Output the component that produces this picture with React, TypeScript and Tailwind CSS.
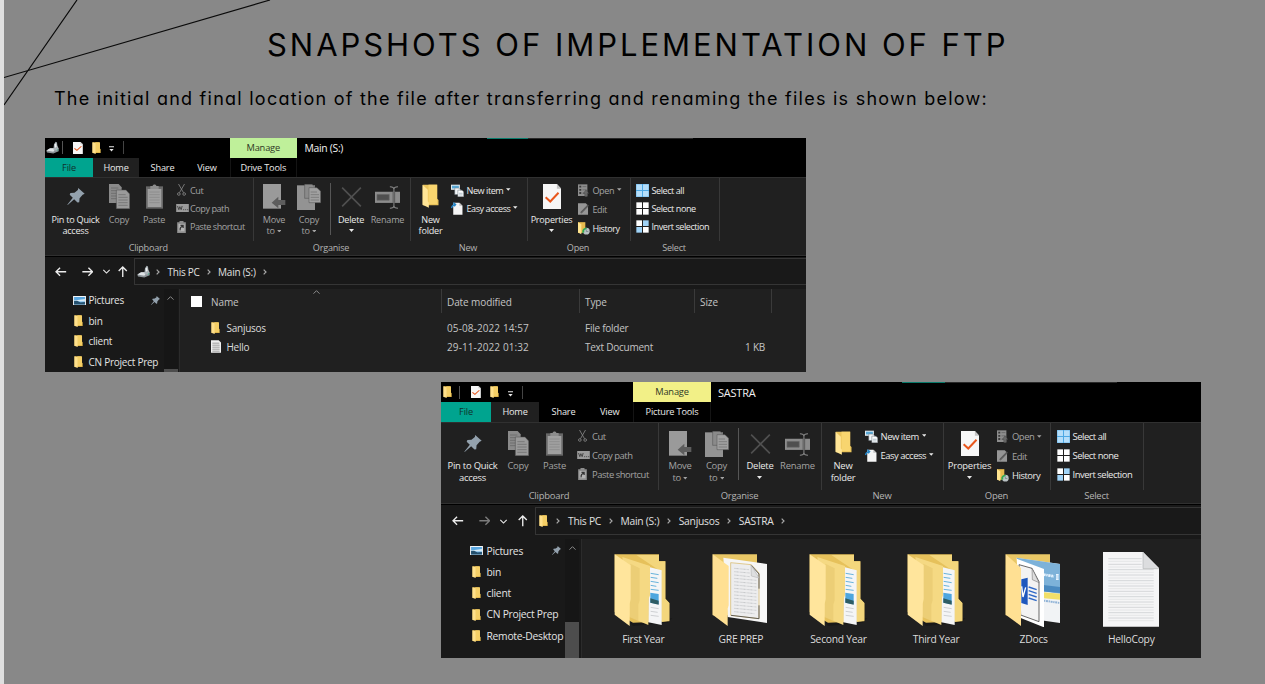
import type { ReactNode } from 'react';

type IconProps = { className?: string };

/* ---------- small icons ---------- */

const PinIcon = ({ className = '' }: IconProps) => (
  <svg viewBox="0 0 51 50" className={className}>
    <path fill="#93a1ad" d="M32 0 51 17 45 20 36 30 35 42 30 43 20 33 1 50 0 49 16 29 7 20 9 15 21 14 31 6Z" />
  </svg>
);

const FolderIcon = ({ className = '' }: IconProps) => (
  <svg viewBox="0 0 27 36" preserveAspectRatio="none" className={className}>
    <path fill="#e2b84c" d="M2 1H22V18L26 22V33H2Z" />
    <path fill="#f5cf66" d="M10 1H24V30H10Z" />
    <path fill="#ffe08a" d="M1 1 11 4V36L1 32Z" />
  </svg>
);

const NewFolderIcon = () => (
  <svg viewBox="0 0 50 72" className="h-[24px] w-[17px]">
    <path fill="#e9c35b" d="M2 2H45V44L49 48V64H2Z" />
    <path fill="#f8d56f" d="M19 2H45V60H19Z" />
    <path fill="#ffe596" d="M1 2 17 17V52L20 56V71L1 62Z" />
  </svg>
);

const DriveIcon = ({ className = '' }: IconProps) => (
  <svg viewBox="0 0 42 36" className={className}>
    <path fill="#8d9499" d="M1 28 13 20 38 20V29L22 36 3 33Z" />
    <path fill="#dfe3e6" d="M1 27 12 20 30 20 22 31Z" />
    <path fill="#a9b1b6" d="M22 24 24 8 29 1 33 3 34 12 38 21 30 28Z" />
    <path fill="#eef1f2" d="M26 9 30 5 32 16 27 19Z" />
    <path fill="#3bbf8f" d="M33 24h3v3h-3z" />
  </svg>
);

const CheckDocIcon = ({ className = '' }: IconProps) => (
  <svg viewBox="0 0 56 74" preserveAspectRatio="none" className={className}>
    <path fill="#f6f6f6" d="M0 0H42L55 14V74H0Z" />
    <path fill="#c4c4c4" d="M42 0V14H55Z" />
    <path fill="none" stroke="#e8561c" strokeWidth="6" d="M8 39 22 52 47 26" />
  </svg>
);

const CopyIcon = () => (
  <svg viewBox="0 0 63 75" className="h-[25px] w-[21px]">
    <path fill="#8a8a8a" d="M0 0H29L38 10V57H0Z" />
    <path stroke="#626262" strokeWidth="2" d="M6 12H28M6 20H32M6 28H32M6 36H32M6 44H32" />
    <path fill="#9a9a9a" stroke="#4b4b4b" strokeWidth="1.5" d="M22 18H51L62 30V74H22Z" />
    <path stroke="#686868" strokeWidth="2" d="M28 32H50M28 40H56M28 48H56M28 56H56M28 64H56" />
  </svg>
);

const PasteIcon = () => (
  <svg viewBox="0 0 51 75" className="h-[25px] w-[17px]">
    <path fill="#686868" d="M0 7H51V74H0Z" />
    <path fill="#a0a0a0" d="M5 15H46V69H5Z" />
    <path fill="#8c8c8c" d="M13 6H20C20 0 31 0 31 6H38V15H13Z" />
    <path stroke="#858585" strokeWidth="2" d="M10 24H41M10 32H41M10 40H41M10 48H41M10 56H41" />
  </svg>
);

const MoveIcon = () => (
  <svg viewBox="0 0 69 75" className="h-[25px] w-[23px]">
    <path fill="#9a9a9a" d="M0 0H54V74H0Z" />
    <path fill="#5d5d5d" d="M26 56 46 38V48H67V63H46V73Z" />
  </svg>
);

const CopyToIcon = () => (
  <svg viewBox="0 0 72 78" className="h-[26px] w-[24px]">
    <path fill="#939393" d="M0 4H54V78H0Z" />
    <path fill="#8a8a8a" stroke="#4f4f4f" strokeWidth="1.5" d="M23 1H45L54 10V43H23Z" />
    <path fill="#a0a0a0" stroke="#505050" strokeWidth="1.5" d="M36 11H60L71 22V56H36Z" />
    <path stroke="#6c6c6c" strokeWidth="2" d="M41 24H60M41 32H66M41 40H66M41 48H66" />
  </svg>
);

const DeleteIcon = () => (
  <svg viewBox="0 0 62 62" className="mt-[3px] h-[20px] w-[21px]">
    <path fill="none" stroke="#505050" strokeWidth="5" d="M2 2 60 60M60 2 2 60" />
  </svg>
);

const RenameIcon = () => (
  <svg viewBox="0 0 74 68" className="mt-[2px] h-[23px] w-[25px]">
    <path fill="#8c8c8c" d="M0 17H74V50H0Z" />
    <path fill="#4f4f4f" stroke="#666" strokeWidth="2" d="M6 25H42V42H6Z" />
    <path fill="none" stroke="#444" strokeWidth="7" d="M56 17V50" />
    <path fill="none" stroke="#8a8a8a" strokeWidth="3" d="M44 2Q56 2 56 10Q56 2 68 2M56 8V60M44 66Q56 66 56 58Q56 66 68 66" />
  </svg>
);

const CutIcon = () => (
  <svg viewBox="0 0 26 36" className="h-[12px] w-[9px]">
    <path fill="none" stroke="#858585" strokeWidth="2.5" d="M4 0 19 26M22 0 7 26" />
    <circle cx="5" cy="30" r="4" fill="none" stroke="#858585" strokeWidth="2.5" />
    <circle cx="21" cy="30" r="4" fill="none" stroke="#858585" strokeWidth="2.5" />
  </svg>
);

const CopyPathIcon = () => (
  <svg viewBox="0 0 38 24" className="h-[8px] w-[13px]">
    <path fill="#9b9b9b" d="M0 0H38V24H0Z" />
    <path fill="none" stroke="#333" strokeWidth="2.4" d="M4 6 8 17 11 8 15 17 18 6M21 17H24M27 17H30M33 17H36" />
  </svg>
);

const PasteShortcutIcon = () => (
  <svg viewBox="0 0 26 36" className="h-[12px] w-[9px]">
    <path fill="#8e8e8e" d="M0 4H7V0H19V4H26V36H0Z" />
    <path fill="#b4b4b4" d="M4 9H22V31H4Z" />
    <path fill="none" stroke="#333" strokeWidth="3.5" d="M9 28C8 21 11 17 17 16M10 13H18V21" />
  </svg>
);

const NewItemIcon = () => (
  <svg viewBox="0 0 38 38" className="h-[13px] w-[13px]">
    <path fill="#dfe9ef" d="M0 2H26V17H0Z" />
    <path fill="#58a7d4" d="M3 5H23V13H3Z" />
    <path fill="#f3f6f8" stroke="#6d7780" strokeWidth="1.5" d="M11 12H23L27 16V31H11Z" />
    <path fill="#fff" stroke="#6d7780" strokeWidth="1.5" d="M20 18H32L37 23V37H20Z" />
    <path stroke="#8ea3b0" strokeWidth="2" d="M23 27H34M23 32H34" />
  </svg>
);

const EasyAccessIcon = () => (
  <svg viewBox="0 0 34 38" className="h-[13px] w-[12px]">
    <path fill="#f5f5f5" d="M6 2H24L33 11V37H6Z" />
    <path fill="#bdbdbd" d="M24 2V11H33Z" />
    <path fill="none" stroke="#2384c6" strokeWidth="4" d="M1 18C2 11 5 8 12 7M6 2 13 7 9 13" />
  </svg>
);

const OpenIcon = () => (
  <svg viewBox="0 0 34 38" className="h-[13px] w-[11px]">
    <path fill="#8d8d8d" d="M0 0H29V36H0Z" />
    <path fill="#383838" d="M4 4H10V10H4ZM4 14H10V20H4ZM4 24H10V30H4Z" />
    <path stroke="#5c5c5c" strokeWidth="2" d="M14 7H26M14 17H26M14 27H20" />
    <path fill="#686868" stroke="#303030" strokeWidth="1" d="M25 17 34 28H29V38H21V28H16Z" />
  </svg>
);

const EditIcon = () => (
  <svg viewBox="0 0 34 36" className="h-[12px] w-[11px]">
    <path fill="#969696" d="M0 0H24L31 7V36H0Z" />
    <path fill="none" stroke="#4b4b4b" strokeWidth="5" d="M9 30 32 6" />
    <path fill="none" stroke="#777" strokeWidth="2" d="M8 31 30 8" />
  </svg>
);

const HistoryIcon = () => (
  <svg viewBox="0 0 36 38" className="h-[13px] w-[12px]">
    <path fill="#e7bb4e" d="M0 0H22V32H0Z" />
    <path fill="#ffe48f" d="M0 0 10 6V36L0 31Z" />
    <circle cx="25" cy="27" r="10" fill="#b9c2c4" />
    <path fill="#32a852" d="M13 25C16 17 23 15 27 18L23 22C19 22 18 25 19 30L13 33Z" />
    <path fill="none" stroke="#68767a" strokeWidth="2" d="M25 22V28H31" />
  </svg>
);

const SelectIcon = ({ fills, joined = false }: { fills: string[]; joined?: boolean }) => (
  <svg viewBox="0 0 38 38" className="h-[13px] w-[13px]">
    {joined && <path fill="#4da8e4" d="M0 0H38V38H0Z" />}
    <path fill={fills[0]} d="M1 1H17.5V17.5H1Z" />
    <path fill={fills[1]} d="M20.5 1H37V17.5H20.5Z" />
    <path fill={fills[2]} d="M1 20.5H17.5V37H1Z" />
    <path fill={fills[3]} d="M20.5 20.5H37V37H20.5Z" />
  </svg>
);

const PicturesIcon = () => (
  <svg viewBox="0 0 38 28" className="h-[9.5px] w-[13px]">
    <path fill="#f2f5f7" d="M0 0H38V28H0Z" />
    <path fill="#5aa7e0" d="M3 3H35V25H3Z" />
    <path fill="#d7ecf7" d="M3 13 35 9V16H3Z" />
    <path fill="#24506e" d="M3 15 12 14 22 19 35 18V25H3Z" />
  </svg>
);

const TextFileIcon = () => (
  <svg viewBox="0 0 30 38" className="h-[13px] w-[10px]">
    <path fill="#f0f0f0" d="M0 0H23L30 7V38H0Z" />
    <path stroke="#8c8c8c" strokeWidth="2.5" d="M4 9H25M4 15H26M4 21H26M4 27H26M4 33H26" />
  </svg>
);

const Caret = ({ className = '' }: IconProps) => (
  <svg viewBox="0 0 10 6" className={className}>
    <path fill="currentColor" d="M0 0H10L5 6Z" />
  </svg>
);

const QuickMenuIcon = () => (
  <svg viewBox="0 0 14 16" className="h-[6px] w-[5px] text-[#e8e8e8]">
    <path fill="currentColor" d="M0 0H14V3H0ZM1 8H13L7 15Z" />
  </svg>
);

const Chevron = ({ className = '' }: IconProps) => (
  <svg viewBox="0 0 12 18" className={className}>
    <path fill="none" stroke="#a8a8a8" strokeWidth="3.6" d="M2 2 9 9 2 16" />
  </svg>
);

const UpChevron = ({ className = '' }: IconProps) => (
  <svg viewBox="0 0 20 12" className={className}>
    <path fill="none" stroke="#8c8c8c" strokeWidth="3" d="M1 11 10 2 19 11" />
  </svg>
);

const ArrowIcon = ({ d, className }: { d: string; className: string }) => (
  <svg viewBox="0 0 34 34" className={className}>
    <path fill="none" stroke="currentColor" strokeWidth="4" d={d} />
  </svg>
);

/* ---------- large folder thumbnails ---------- */

const FolderBack = () => (
  <>
    <path fill="#111" opacity=".45" d="M50 212 178 198 165 212 60 222Z" />
    <path fill="#e6c15b" d="M5 7H138V28H157V140L169 153V208L60 212 5 180Z" />
    <path fill="#f3d67c" d="M70 9H138V28H157V140L169 153V206L146 210V60Z" />
  </>
);

const YearFolder = () => (
  <svg viewBox="0 0 180 225" className="h-[75px] w-[60px]">
    <FolderBack />
    <path fill="#f4f5f6" d="M108 45 146 55V219L106 211Z" />
    <path stroke="#68b3dc" strokeWidth="3" d="M113 64 137 68M113 76 133 79M113 88 137 92M113 100 130 103M113 112 137 115" />
    <path fill="#4da6df" d="M112 122 137 126V157L112 152Z" />
    <path fill="#2e5c63" d="M112 139 122 142 137 146V158L112 152Z" />
    <path stroke="#b9bcc0" strokeWidth="2" d="M113 166 137 170M113 178 134 181M113 190 137 193" />
    <path fill="#f5d983" d="M28 15 111 42V130L106 143V219L49 195Z" />
    <path fill="#e2c067" opacity=".45" d="M52 35 80 49V145L76 158V207L50 198Z" />
    <path fill="#ffe59c" d="M5 7 53 40V142L50 155V222L5 188Z" />
  </svg>
);

const DocsFolder = () => (
  <svg viewBox="0 0 180 225" className="h-[75px] w-[60px]">
    <path fill="#e9c766" d="M5 7H138V190H5Z" />
    <path fill="#f6f6f6" d="M37 17 168 36V213L50 195Z" />
    <path fill="#ededee" stroke="#d4b35d" strokeWidth="2" d="M59 32 121 38 144 63V200L59 190Z" />
    <path fill="none" stroke="#484848" strokeWidth="2.5" d="M60 190 144 200V160M144 110V66L120 39" />
    <path
      stroke="#c6c8ca"
      strokeWidth="3"
      strokeDasharray="4 2 7 3 3 2"
      d="M70 49 114 53M70 59 116 63M70 69 116 74M70 79 136 85M70 89 136 95M70 99 136 105M70 109 136 115M70 119 136 125M70 129 136 135M70 139 136 145M70 149 136 155M70 159 136 165M70 169 136 175M70 179 130 185"
    />
    <path fill="#dedfe0" stroke="#aaa" strokeWidth="1.5" d="M120 39 121 72 144 78Z" />
    <path fill="#ffe093" d="M5 7 53 42V160L50 170V222L5 188Z" />
  </svg>
);

const ZDocsFolder = () => (
  <svg viewBox="0 0 180 225" className="h-[75px] w-[60px]">
    <path fill="#e9c766" d="M5 7H138V190H5Z" />
    <path fill="#f1f3f5" d="M37 17 168 36V213L110 205Z" />
    <path fill="#7db2d9" d="M37 17 168 36V125L110 117Z" />
    <path fill="#4a8ac0" d="M112 98 168 105V123L112 118Z" />
    <path fill="#f1df68" d="M112 120 168 125V143L112 138Z" />
    <path stroke="#e9f5ff" strokeWidth="8" strokeDasharray="5 2 4 2 7 2" d="M120 68 150 73M160 66V84" />
    <path stroke="#8fb2d6" strokeWidth="6" strokeDasharray="4 2 6 2" d="M120 146 168 153" />
    <path fill="#fff" d="M38 20 120 51V226L50 198Z" />
    <path fill="#f3f3f3" stroke="#4b4b4b" strokeWidth="2.5" d="M45 38 84 49 105 89V209L50 189Z" />
    <path fill="#ddd" stroke="#666" strokeWidth="1.5" d="M84 49 85 83 105 92Z" />
    <path fill="#1f58bd" d="M52 82 71 77V159L52 153Z" />
    <path fill="none" stroke="#fff" strokeWidth="4" d="M53 103 57 135 65 106" />
    <path stroke="#2f69c7" strokeWidth="4" d="M74 105 98 113M74 116 98 124M74 127 98 135M74 138 98 146" />
    <path fill="#ffe093" d="M5 7 51 48V222L5 188Z" />
  </svg>
);

const TextDocument = () => (
  <svg viewBox="0 0 180 225" className="h-[75px] w-[60px]">
    <path fill="#f5f5f6" d="M6 0H126L174 48V224H6Z" />
    <path
      stroke="#c4c7ca"
      strokeWidth="2"
      d="M22 20H122M22 37H122M22 53H158M22 69H158M22 86H158M22 102H158M22 118H158M22 134H158M22 150H158M22 166H158M22 182H158M22 198H158"
    />
    <path
      stroke="#dcdee0"
      strokeWidth="2"
      d="M22 28H122M22 45H122M22 61H158M22 78H158M22 94H158M22 110H158M22 126H158M22 142H158M22 158H158M22 174H158M22 190H158M22 206H158"
    />
    <path fill="#dcdddf" d="M126 0V50H174Z" />
    <path fill="none" stroke="#b4b6b8" strokeWidth="2" d="M126 0V50H174" />
  </svg>
);

/* ---------- ribbon ---------- */

type Layout = {
  accent: string;
  titleBar: string;
  tabBar: string;
  lead: string;
  manage: string;
  titleText: string;
  tabs: [string, string, string, string];
  toolTab: string;
  ribbon: string;
  buttons: string;
  row: string;
  list: string;
  openRow: string;
  openList: string;
  large: string;
  groupLabel: string;
  clip: [string, string, string, string];
  org: [string, string, string, string, string, string];
  fresh: [string, string];
  open: [string, string];
  select: string;
  iconCol: string;
  newCol: string;
  openCol: string;
  selectCol: string;
};

const SMALL: Layout = {
  accent: 'bg-[#bff09a]',
  titleBar: 'h-[19.5px]',
  tabBar: 'h-[19.5px]',
  lead: 'w-[184.5px]',
  manage: 'w-[67.5px]',
  titleText: 'pl-[7.5px] text-[10.4px] tracking-[-0.03em]',
  tabs: ['w-[48px]', 'w-[46px]', 'w-[47px]', 'w-[42px]'],
  toolTab: 'ml-[1.5px] w-[67.5px]',
  ribbon: 'h-[79px] text-[9.1px]',
  buttons: 'h-[63px]',
  row: 'h-[18.3px]',
  list: 'pt-[3px]',
  openRow: 'h-[18.9px]',
  openList: 'pt-[3px]',
  large: 'pt-[6px] leading-[11.8px]',
  groupLabel: 'h-[13px]',
  clip: ['w-[208.5px]', 'w-[61px]', 'w-[26px]', 'w-[44px]'],
  org: ['w-[157px]', 'w-[41px]', 'w-[29px]', 'w-[14px]', 'w-[29px]', 'w-[44px]'],
  fresh: ['w-[117px]', 'w-[40px]'],
  open: ['w-[103px]', 'w-[48px]'],
  select: 'w-[89px]',
  iconCol: 'w-[14.5px]',
  newCol: 'w-[15.5px]',
  openCol: 'w-[15px]',
  selectCol: 'w-[15.5px]',
};

const LARGE: Layout = {
  accent: 'bg-[#f2f087]',
  titleBar: 'h-[20px]',
  tabBar: 'h-[20px]',
  lead: 'w-[192px]',
  manage: 'w-[78px]',
  titleText: 'pl-[7px] text-[11px] tracking-[-0.02em]',
  tabs: ['w-[50px]', 'w-[48px]', 'w-[49px]', 'w-[43.5px]'],
  toolTab: 'ml-[1.5px] w-[78px]',
  ribbon: 'h-[82px] text-[9.45px]',
  buttons: 'h-[66.5px]',
  row: 'h-[18.9px]',
  list: 'pt-[4px]',
  openRow: 'h-[19.5px]',
  openList: 'pt-[4px]',
  large: 'pt-[7.5px] leading-[12.2px]',
  groupLabel: 'h-[13px]',
  clip: ['w-[218px]', 'w-[63px]', 'w-[28px]', 'w-[45px]'],
  org: ['w-[163px]', 'w-[42px]', 'w-[31px]', 'w-[13px]', 'w-[30px]', 'w-[45px]'],
  fresh: ['w-[122px]', 'w-[42px]'],
  open: ['w-[107px]', 'w-[51px]'],
  select: 'w-[93px]',
  iconCol: 'w-[15.5px]',
  newCol: 'w-[16px]',
  openCol: 'w-[15px]',
  selectCol: 'w-[16px]',
};

const Group = ({ label, width, layout, children }: { label: string; width: string; layout: Layout; children: ReactNode }) => (
  <div className={`flex shrink-0 flex-col ${width}`}>
    <div className={`flex border-r border-[#383838] ${layout.buttons}`}>{children}</div>
    <div className={`flex items-center justify-center pr-[2px] text-[#b4b4b4] ${layout.groupLabel}`}>{label}</div>
  </div>
);

const BigButton = ({
  icon, lines, width, layout, dim = false, caret = '',
}: { icon: ReactNode; lines: string[]; width: string; layout: Layout; dim?: boolean; caret?: '' | 'below' | 'inline' }) => (
  <div className={`flex shrink-0 flex-col items-center whitespace-nowrap ${width} ${layout.large} ${dim ? 'text-[#a3a3a3]' : 'text-[#eaeaea]'}`}>
    <div className="flex h-[27px] shrink-0 items-start justify-center">{icon}</div>
    <div className="mt-[2.5px] flex flex-col items-center">
      {lines.map((line, i) => (
        <span key={line} className="flex items-center gap-[2px]">
          {line}
          {caret === 'inline' && i === lines.length - 1 && <Caret className="h-[2.5px] w-[4.5px]" />}
        </span>
      ))}
      {caret === 'below' && <Caret className="mt-[4px] h-[3px] w-[5px]" />}
    </div>
  </div>
);

const SmallButton = ({
  icon, label, col, row, dim = false, caret = false,
}: { icon: ReactNode; label: string; col: string; row: string; dim?: boolean; caret?: boolean }) => (
  <div className={`flex items-center whitespace-nowrap tracking-[-0.05em] ${row} ${dim ? 'text-[#a3a3a3]' : 'text-[#eaeaea]'}`}>
    <span className={`flex shrink-0 items-center ${col}`}>{icon}</span>
    {label}
    {caret && <Caret className="mb-[1px] ml-[3px] h-[3px] w-[4.5px]" />}
  </div>
);

const Ribbon = ({ layout }: { layout: Layout }) => {
  const { clip, org, fresh, open, select, row, openRow } = layout;
  return (
    <div className={`flex shrink-0 border-t border-b border-[#303030] bg-[#202020] tracking-[-0.025em] ${layout.ribbon}`}>
      <Group label="Clipboard" width={clip[0]} layout={layout}>
        <BigButton layout={layout} width={clip[1]} lines={['Pin to Quick', 'access']} icon={<PinIcon className="mt-[4px] h-[17px] w-[18px]" />} />
        <BigButton layout={layout} width={clip[2]} dim lines={['Copy']} icon={<CopyIcon />} />
        <BigButton layout={layout} width={clip[3]} dim lines={['Paste']} icon={<PasteIcon />} />
        <div className={`-ml-[0.5px] flex flex-col ${layout.list}`}>
          <SmallButton row={row} col={`${layout.iconCol} pl-[1.5px]`} dim label="Cut" icon={<CutIcon />} />
          <SmallButton row={row} col={layout.iconCol} dim label="Copy path" icon={<CopyPathIcon />} />
          <SmallButton row={row} col={`${layout.iconCol} pl-[1.5px]`} dim label="Paste shortcut" icon={<PasteShortcutIcon />} />
        </div>
      </Group>
      <Group label="Organise" width={org[0]} layout={layout}>
        <BigButton layout={layout} width={org[1]} dim caret="inline" lines={['Move', 'to']} icon={<MoveIcon />} />
        <BigButton layout={layout} width={org[2]} dim caret="inline" lines={['Copy', 'to']} icon={<CopyToIcon />} />
        <div className={`flex justify-center pt-[5px] ${org[3]}`}>
          <div className="h-[52px] w-px bg-[#565656]" />
        </div>
        <BigButton layout={layout} width={org[4]} caret="below" lines={['Delete']} icon={<DeleteIcon />} />
        <BigButton layout={layout} width={org[5]} dim lines={['Rename']} icon={<RenameIcon />} />
      </Group>
      <Group label="New" width={fresh[0]} layout={layout}>
        <BigButton layout={layout} width={fresh[1]} lines={['New', 'folder']} icon={<NewFolderIcon />} />
        <div className={`flex flex-col pl-[0.5px] ${layout.list}`}>
          <SmallButton row={row} col={layout.newCol} caret label="New item" icon={<NewItemIcon />} />
          <SmallButton row={row} col={layout.newCol} caret label="Easy access" icon={<EasyAccessIcon />} />
        </div>
      </Group>
      <Group label="Open" width={open[0]} layout={layout}>
        <BigButton layout={layout} width={open[1]} caret="below" lines={['Properties']} icon={<CheckDocIcon className="ml-[1px] h-[25px] w-[18.5px]" />} />
        <div className={`flex flex-col pl-[2px] ${layout.openList}`}>
          <SmallButton row={openRow} col={layout.openCol} dim caret label="Open" icon={<OpenIcon />} />
          <SmallButton row={openRow} col={layout.openCol} dim label="Edit" icon={<EditIcon />} />
          <SmallButton row={openRow} col={layout.openCol} label="History" icon={<HistoryIcon />} />
        </div>
      </Group>
      <Group label="Select" width={select} layout={layout}>
        <div className={`flex flex-col pl-[5.5px] ${layout.list}`}>
          <SmallButton row={row} col={layout.selectCol} label="Select all" icon={<SelectIcon joined fills={['#b5defa', '#b5defa', '#b5defa', '#b5defa']} />} />
          <SmallButton row={row} col={layout.selectCol} label="Select none" icon={<SelectIcon fills={['#ffffff', '#ffffff', '#ffffff', '#ffffff']} />} />
          <SmallButton row={row} col={layout.selectCol} label="Invert selection" icon={<SelectIcon fills={['#ffffff', '#9fd3f7', '#9fd3f7', '#ffffff']} />} />
        </div>
      </Group>
    </div>
  );
};

const Header = ({
  layout, title, tool, quick, stripe,
}: { layout: Layout; title: string; tool: string; quick: ReactNode; stripe: ReactNode }) => (
  <div className="relative flex shrink-0 flex-col bg-black">
    {stripe}
    <div className={`flex ${layout.titleBar}`}>
      <div className={`flex shrink-0 items-center ${layout.lead}`}>{quick}</div>
      <div className={`flex shrink-0 items-center justify-center text-[9.3px] tracking-[-0.02em] text-[#2f3a26] ${layout.accent} ${layout.manage}`}>Manage</div>
      <div className={`flex items-center text-[#f2f2f2] ${layout.titleText}`}>{title}</div>
    </div>
    <div className={`flex text-[9.2px] tracking-[-0.02em] text-[#eaeaea] ${layout.tabBar}`}>
      <div className={`flex items-center justify-center bg-[#00a48f] text-[#10312d] ${layout.tabs[0]}`}>File</div>
      <div className={`flex items-center justify-center bg-[#202020] ${layout.tabs[1]}`}>Home</div>
      <div className={`flex items-center justify-center ${layout.tabs[2]}`}>Share</div>
      <div className={`flex items-center justify-center ${layout.tabs[3]}`}>View</div>
      <div className={`flex items-center justify-center whitespace-nowrap border-x border-[#141414] ${layout.toolTab}`}>{tool}</div>
    </div>
  </div>
);

const NavButtons = ({ forward, width, up }: { forward: string; width: string; up: string }) => (
  <div className={`flex shrink-0 items-center text-[#ececec] ${width}`}>
    <ArrowIcon d="M33 17H3M15 5 3 17 15 29" className="h-[11.5px] w-[11.5px]" />
    <ArrowIcon d="M1 17H31M19 5 31 17 19 29" className={`ml-[15px] h-[11.5px] w-[11.5px] ${forward}`} />
    <ArrowIcon d="M5 11 17 23 29 11" className="ml-[8.5px] h-[9px] w-[9px]" />
    <ArrowIcon d="M17 33V3M5 15 17 3 29 15" className={`h-[11.5px] w-[11.5px] ${up}`} />
  </div>
);

const Crumbs = ({ items, gap }: { items: string[]; gap: string }) => (
  <div className="flex items-center whitespace-nowrap text-[#e0e0e0]">
    {items.map((item) => (
      <span key={item} className={`flex items-center ${gap}`}>
        <Chevron className="h-[6px] w-[4px]" />
        {item}
      </span>
    ))}
    <Chevron className="h-[6px] w-[4px]" />
  </div>
);

const Sidebar = ({ items, row, textCol, width }: { items: string[]; row: string; textCol: string; width: string }) => (
  <div className={`flex shrink-0 flex-col overflow-hidden pt-px whitespace-nowrap text-[#e4e4e4] ${width}`}>
    {items.map((item) => (
      <div key={item} className={`flex shrink-0 items-center ${row}`}>
        <span className={`flex shrink-0 items-center ${textCol}`}>
          {item === 'Pictures' ? <PicturesIcon /> : <FolderIcon className="ml-[1.5px] h-[12px] w-[9px]" />}
        </span>
        {item}
        {item === 'Pictures' && <PinIcon className="mr-[4px] ml-auto h-[9px] w-[9px]" />}
      </div>
    ))}
  </div>
);

const files = [
  { icon: <FolderIcon className="h-[12px] w-[9px]" />, name: 'Sanjusos', date: '05-08-2022 14:57', type: 'File folder', size: '' },
  { icon: <TextFileIcon />, name: 'Hello', date: '29-11-2022 01:32', type: 'Text Document', size: '1 KB' },
];

const DriveWindow = () => (
  <section className="flex h-[234px] w-[761px] flex-col overflow-hidden bg-[#191919]">
    <Header
      layout={SMALL}
      title="Main (S:)"
      tool="Drive Tools"
      stripe={
        <div className="absolute top-0 left-[442px] flex h-px w-[206px] bg-[#2a2a2a]">
          <div className="w-[41px] bg-[#087a6b]" />
        </div>
      }
      quick={
        <>
          <DriveIcon className="ml-[1px] h-[13px] w-[14px]" />
          <span className="ml-[2px] h-[13px] w-px bg-[#555]" />
          <CheckDocIcon className="ml-[10px] h-[12px] w-[10px]" />
          <FolderIcon className="ml-[8.5px] h-[12px] w-[9px]" />
          <span className="ml-[8.5px] flex pt-[3px]"><QuickMenuIcon /></span>
          <span className="ml-[8.5px] h-[13px] w-px bg-[#444]" />
        </>
      }
    />
    <Ribbon layout={SMALL} />
    <div className="flex h-[33px] shrink-0 items-start border-t border-black pt-[1px]">
      <div className="flex h-[27px] w-full items-center text-[10px] tracking-[-0.025em]">
        <div className="w-[10px] shrink-0" />
        <NavButtons forward="text-[#ececec]" width="w-[79px]" up="ml-[6.5px]" />
        <div className="flex h-full grow items-center border border-r-0 border-[#353535] pl-[2px]">
          <DriveIcon className="mr-[5px] h-[13px] w-[14px]" />
          <Crumbs items={['This PC', 'Main (S:)']} gap="mr-[7px] gap-[7.5px]" />
        </div>
      </div>
    </div>
    <div className="flex grow text-[10px] tracking-[-0.025em]">
      <div className="w-[27.5px] shrink-0" />
      <Sidebar items={['Pictures', 'bin', 'client', 'CN Project Prep']} row="h-[20.5px]" textCol="w-[16px]" width="w-[91px]" />
      <div className="flex w-[14px] flex-col items-center justify-between bg-[#161616]">
        <UpChevron className="mt-[7px] h-[4px] w-[7px]" />
        <div className="h-[3px] w-full bg-[#4d4d4d]" />
      </div>
      <div className="ml-[1.5px] flex grow flex-col border-l border-[#2b2b2b] bg-[#202020] text-[#c4c4c4]">
        <div className="relative grid h-[24px] grid-cols-[262px_138px_115px_77px_1fr] tracking-[-0.01em]">
          <UpChevron className="absolute top-[1px] left-[133px] h-[4px] w-[7px]" />
          <div className="flex items-center border-r border-[#3a3a3a] pl-[11px]">
            <span className="mr-[9px] h-[11px] w-[11px] bg-white" />
            <span className="pt-px">Name</span>
          </div>
          <div className="flex items-center border-r border-[#3a3a3a] pt-px pl-[5px]">Date modified</div>
          <div className="flex items-center border-r border-[#3a3a3a] pt-px pl-[5px]">Type</div>
          <div className="flex items-center border-r border-[#3a3a3a] pt-px pl-[5px]">Size</div>
        </div>
        <div className="flex flex-col pt-[6px]">
          {files.map((f) => (
            <div key={f.name} className="grid h-[18.5px] grid-cols-[262px_138px_115px_77px] items-center">
              <div className="flex items-center pl-[31px] text-[#dcdcdc]">
                <span className="flex w-[15.5px]">{f.icon}</span>
                {f.name}
              </div>
              <div className="pl-[5px] tracking-[0.01em]">{f.date}</div>
              <div className="pl-[5px]">{f.type}</div>
              <div className="pr-[7px] text-right">{f.size}</div>
            </div>
          ))}
        </div>
      </div>
    </div>
  </section>
);

const thumbs = [
  { name: 'First Year', art: <YearFolder /> },
  { name: 'GRE PREP', art: <DocsFolder /> },
  { name: 'Second Year', art: <YearFolder /> },
  { name: 'Third Year', art: <YearFolder /> },
  { name: 'ZDocs', art: <ZDocsFolder /> },
  { name: 'HelloCopy', art: <TextDocument /> },
];

const FolderWindow = () => (
  <section className="flex h-[276px] w-[760px] flex-col overflow-hidden bg-[#191919]">
    <Header
      layout={LARGE}
      title="SASTRA"
      tool="Picture Tools"
      stripe={
        <div className="absolute top-0 left-[461px] flex h-px w-[215px] bg-[#2a2a2a]">
          <div className="w-[43px] bg-[#087a6b]" />
        </div>
      }
      quick={
        <>
          <FolderIcon className="ml-[2px] h-[12px] w-[9px]" />
          <span className="ml-[6.5px] h-[13px] w-px bg-[#555]" />
          <CheckDocIcon className="ml-[11px] h-[12px] w-[10px]" />
          <FolderIcon className="ml-[9.5px] h-[12px] w-[9px]" />
          <span className="ml-[9px] flex pt-[3px]"><QuickMenuIcon /></span>
          <span className="ml-[9px] h-[13px] w-px bg-[#444]" />
        </>
      }
    />
    <Ribbon layout={LARGE} />
    <div className="flex h-[35px] shrink-0 items-start border-t border-black pt-[2px]">
      <div className="flex h-[28px] w-full items-center text-[10.3px] tracking-[-0.025em]">
        <div className="w-[11px] shrink-0" />
        <NavButtons forward="text-[#7c7c7c]" width="w-[82.5px]" up="ml-[9px]" />
        <div className="flex h-full grow items-center border border-r-0 border-[#353535] pl-[3px]">
          <FolderIcon className="mr-[8.5px] h-[12px] w-[9px]" />
          <Crumbs items={['This PC', 'Main (S:)', 'Sanjusos', 'SASTRA']} gap="mr-[7.5px] gap-[8px]" />
        </div>
      </div>
    </div>
    <div className="flex grow text-[10.3px] tracking-[-0.025em]">
      <div className="w-[29px] shrink-0" />
      <Sidebar items={['Pictures', 'bin', 'client', 'CN Project Prep', 'Remote-Desktop']} row="h-[21.3px]" textCol="w-[16.5px]" width="w-[95px]" />
      <div className="flex w-[14px] flex-col items-center justify-between bg-[#161616]">
        <UpChevron className="mt-[7px] h-[4px] w-[7px]" />
        <div className="h-[36px] w-full bg-[#4d4d4d]" />
      </div>
      <div className="ml-[2px] flex grow border-l border-[#2b2b2b] bg-[#202020] pl-[12.5px] text-[#dcdcdc]">
        {thumbs.map((t) => (
          <div key={t.name} className="flex w-[97.6px] shrink-0 flex-col items-center pt-[13px]">
            {t.art}
            <span className="mt-[5px] leading-[14px]">{t.name}</span>
          </div>
        ))}
      </div>
    </div>
  </section>
);

export default function App() {
  return (
    <main className="relative flex h-[684px] w-[1265px] flex-col overflow-hidden border-l-4 border-[#dfdfdf] bg-[#888888] font-['Open_Sans',sans-serif] leading-none">
      <svg viewBox="0 0 280 110" className="absolute top-0 left-0 h-[110px] w-[280px]">
        <path fill="none" stroke="#0a0a0a" strokeWidth="1.2" d="M0 105 73 0M0 77.5 266 0" />
      </svg>
      <h1 className="mt-[25px] ml-[263px] h-[40px] font-['Inter',sans-serif] text-[31px] leading-[40px] tracking-[0.0955em] whitespace-nowrap text-black">
        SNAPSHOTS OF IMPLEMENTATION OF FTP
      </h1>
      <p className="mt-[22px] ml-[50px] h-[24px] font-['Inter',sans-serif] text-[18px] leading-[24px] tracking-[0.0695em] whitespace-nowrap text-black [font-feature-settings:'cv11'_1]">
        The initial and final location of the file after transferring and renaming the files is shown below:
      </p>
      <div className="mt-[27px] ml-[41px] flex flex-col gap-[10px]">
        <DriveWindow />
        <div className="pl-[396px]">
          <FolderWindow />
        </div>
      </div>
    </main>
  );
}
